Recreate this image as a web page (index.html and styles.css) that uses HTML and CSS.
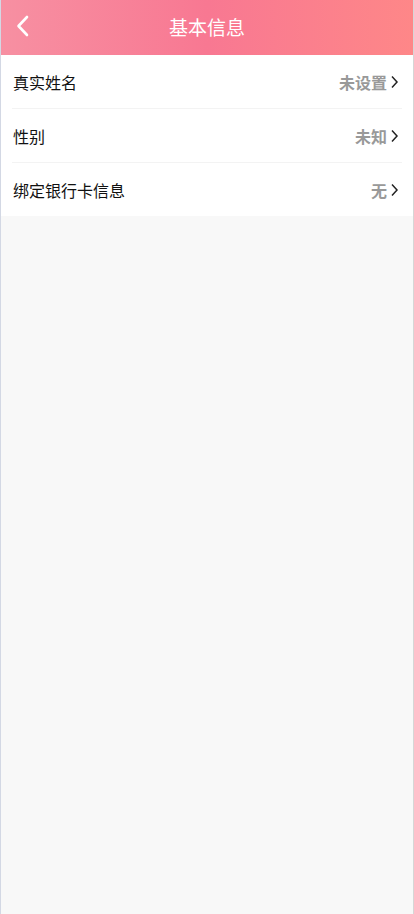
FILE: index.html
```html
<!DOCTYPE html>
<html lang="zh">
<head>
<meta charset="utf-8">
<meta name="viewport" content="width=device-width, initial-scale=1">
<title>基本信息</title>
<link rel="stylesheet" href="styles.css">
</head>
<body>
<div class="app">
  <header class="topbar">
    <span class="back">
      <svg width="14" height="22" viewBox="0 0 14 22" aria-hidden="true">
        <path d="M11 2 L2.5 11 L11 20" fill="none" stroke="#fff" stroke-width="2.6" stroke-linecap="round" stroke-linejoin="round"/>
      </svg>
    </span>
    <h1 class="title">基本信息</h1>
  </header>
  <ul class="list">
    <li class="row">
      <span class="label">真实姓名</span>
      <span class="value">未设置<svg class="chev" width="9" height="14" viewBox="0 0 9 14"><path d="M2 1.5 L7 7 L2 12.5" fill="none" stroke="#222" stroke-width="1.5"/></svg></span>
    </li>
    <li class="row">
      <span class="label">性别</span>
      <span class="value">未知<svg class="chev" width="9" height="14" viewBox="0 0 9 14"><path d="M2 1.5 L7 7 L2 12.5" fill="none" stroke="#222" stroke-width="1.5"/></svg></span>
    </li>
    <li class="row">
      <span class="label">绑定银行卡信息</span>
      <span class="value">无<svg class="chev" width="9" height="14" viewBox="0 0 9 14"><path d="M2 1.5 L7 7 L2 12.5" fill="none" stroke="#222" stroke-width="1.5"/></svg></span>
    </li>
  </ul>
</div>
</body>
</html>
```
FILE: styles.css
```css
* { box-sizing: border-box; }
html, body { margin: 0; padding: 0; height: 100%; }
body {
  font-family: "Noto Sans CJK SC", "Noto Sans", sans-serif;
  background: #f8f8f8;
}
.app {
  min-height: 914px;
  background: #f8f8f8;
  border-left: 1px solid #d3d8e4;
  border-right: 1px solid #d6d6d6;
}
.topbar {
  height: 55px;
  display: flex;
  align-items: center;
  justify-content: center;
  position: relative;
  background: linear-gradient(90deg, #f790a2 0%, #f87892 50%, #fe8788 100%);
}
.back {
  position: absolute;
  left: 15px;
  top: 15px;
  width: 14px;
  height: 22px;
  display: flex;
}
.title {
  margin: 0;
  color: #fff;
  font-size: 19px;
  font-weight: 400;
  line-height: 1;
  padding-bottom: 2px;
}
.list {
  list-style: none;
  margin: 0;
  padding: 0 11px;
  background: #fff;
}
.row {
  height: 54px;
  display: flex;
  align-items: center;
  justify-content: space-between;
  border-bottom: 1px solid #f3f3f3;
  padding: 1px 3px 0 0;
}
.row:last-child { border-bottom: none; height: 53px; }
.label {
  font-size: 16px;
  color: #111;
  padding-left: 1px;
}
.value {
  font-size: 16px;
  font-weight: 700;
  color: #999;
  display: flex;
  align-items: center;
  gap: 3px;
}
.chev { display: block; }
```
